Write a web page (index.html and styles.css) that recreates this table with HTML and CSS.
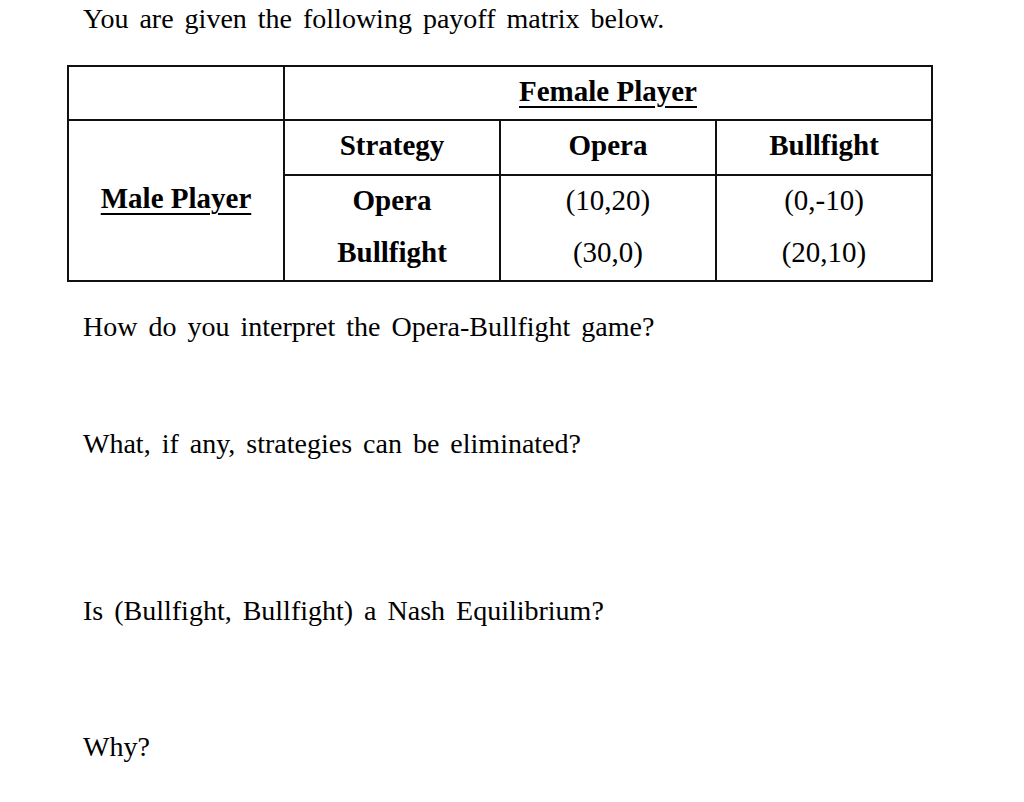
FILE: index.html
```html
<!DOCTYPE html>
<html>
<head>
<meta charset="utf-8">
<link rel="stylesheet" href="styles.css">
</head>
<body>
<div class="page">
  <p class="intro">You are given the following payoff matrix below.</p>
  <table class="matrix">
    <tr class="r1">
      <td></td>
      <td colspan="3" class="bold"><span class="ul">Female Player</span></td>
    </tr>
    <tr class="r2">
      <td rowspan="3" class="bold"><span class="ul">Male Player</span></td>
      <td class="bold">Strategy</td>
      <td class="bold">Opera</td>
      <td class="bold">Bullfight</td>
    </tr>
    <tr class="r3">
      <td class="bold">Opera</td>
      <td>(10,20)</td>
      <td>(0,-10)</td>
    </tr>
    <tr class="r4">
      <td class="bold">Bullfight</td>
      <td>(30,0)</td>
      <td>(20,10)</td>
    </tr>
  </table>
  <p class="q q1">How do you interpret the Opera-Bullfight game?</p>
  <p class="q q2">What, if any, strategies can be eliminated?</p>
  <p class="q q3">Is (Bullfight, Bullfight) a Nash Equilibrium?</p>
  <p class="q q4">Why?</p>
</div>
</body>
</html>
```
FILE: styles.css
```css
html, body {
  margin: 0;
  padding: 0;
  background: #fff;
}
.page {
  font-family: "Liberation Serif", "Times New Roman", serif;
  font-size: 28px;
  word-spacing: 4px;
  color: #000;
  padding-top: 4px;
}
p {
  margin: 0;
  padding-left: 83px;
  line-height: 30px;
}
.matrix {
  margin-top: 31px;
  margin-left: 67px;
  width: 866px;
  border-collapse: collapse;
  table-layout: fixed;
  font-family: "Liberation Serif", "Times New Roman", serif;
  font-size: 29px;
  word-spacing: 0;
}
.matrix td {
  border: 2px solid #111;
  text-align: center;
  vertical-align: middle;
  padding: 0 0 5px 0;
  line-height: 30px;
}
.matrix .r3 td { border-bottom: none; }
.matrix .r4 td { border-top: none; }
.r1 td { height: 47px; }
.r2 td { height: 48px; }
.r3 td { height: 47px; }
.r4 td { height: 47px; }
.bold { font-weight: bold; }
.ul {
  text-decoration: underline;
  text-decoration-thickness: 2px;
  text-underline-offset: 5px;
}
.q1 { margin-top: 30px; }
.q2 { margin-top: 87px; }
.q3 { margin-top: 137px; }
.q4 { margin-top: 106px; }
```
